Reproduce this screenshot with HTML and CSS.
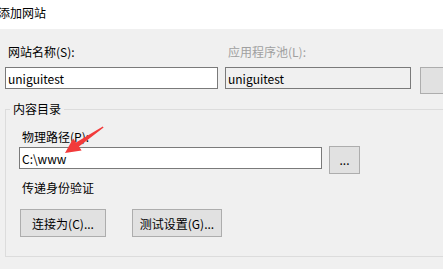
FILE: index.html
```html
<!DOCTYPE html>
<html lang="zh-CN">
<head>
  <meta charset="UTF-8" />
  <title>添加网站</title>
  <link rel="stylesheet" href="styles.css">
</head>
<body>
  <header class="title-bar">添加网站</header>

  <main class="dialog">
    <div class="site-row">
      <div class="field field-name">
        <label>网站名称(S):</label>
        <input type="text" class="text-box" value="uniguitest" />
      </div>
      <div class="field field-pool">
        <label class="disabled">应用程序池(L):</label>
        <input type="text" class="text-box readonly" value="uniguitest" readonly />
      </div>
      <div class="field field-select">
        <button class="btn btn-select"></button>
      </div>
    </div>

    <fieldset class="group">
      <legend>内容目录</legend>
      <div class="group-body">
        <label class="path-label">物理路径(P):</label>
        <div class="path-row">
          <input type="text" class="text-box path-box" value="C:\www" />
          <button class="btn btn-browse">...</button>
        </div>
        <div class="auth-label">传递身份验证</div>
        <div class="auth-buttons">
          <button class="btn btn-connect">连接为(C)...</button>
          <button class="btn btn-test">测试设置(G)...</button>
        </div>
      </div>
    </fieldset>
  </main>

  <!-- red annotation arrow pointing at the path -->
  <svg class="arrow" width="60" height="40" viewBox="60 120 60 40">
    <polygon points="103.6,127.4 79,146.6 81.6,150.6 65,153 73.2,138.6 76,142.4 102.8,126.6" fill="#f23b3b" />
  </svg>
</body>
</html>
```

FILE: styles.css
```css
* {
  box-sizing: border-box;
}

body {
  margin: 0;
  width: 443px;
  height: 269px;
  overflow: hidden;
  position: relative;
  background: #f0f0f0;
  color: #000;
  font-family: "Noto Sans CJK SC", "Noto Sans", sans-serif;
  font-size: 12px;
  line-height: 16px;
}

.title-bar {
  height: 29px;
  background: #fff;
  padding: 5px 0 0 0;
  margin-left: -2px;
  font-size: 12px;
}

.dialog {
  padding: 15px 0 0 5px;
}

.site-row {
  display: flex;
  align-items: flex-start;
  width: 470px;
}

.field {
  display: flex;
  flex-direction: column;
  gap: 7px;
}

.field label {
  padding-left: 3px;
  height: 16px;
}

.field label.disabled {
  color: #a0a0a0;
}

.field-name {
  width: 213px;
}

.field-pool {
  width: 186px;
  margin-left: 7px;
}

.field-select {
  margin-left: 9px;
  padding-top: 23px;
}

.text-box {
  height: 22px;
  width: 100%;
  margin: 0;
  border: 1px solid #7a7a7a;
  background: #fff;
  padding: 0 2px;
  font-family: inherit;
  font-size: 12px;
  color: #000;
  outline: none;
}

.text-box.readonly {
  background: #f0f0f0;
}

.btn {
  margin: 0;
  padding: 0;
  height: 28px;
  border: 1px solid #adadad;
  background: #e1e1e1;
  font-family: inherit;
  font-size: 12px;
  color: #000;
}

.btn-select {
  width: 40px;
  height: 27px;
}

.group {
  margin: 7px 0 0 0;
  padding: 0;
  width: 460px;
  border: 1px solid #dcdcdc;
  border-right: none;
  min-inline-size: 0;
}

.group legend {
  margin-left: 4px;
  padding: 0 3px;
  line-height: 16px;
}

.group-body {
  padding: 12px 0 19px 14px;
}

.path-label {
  display: block;
  margin-left: 2px;
  height: 16px;
}

.path-row {
  display: flex;
  align-items: flex-start;
  margin-top: 1px;
}

.path-box {
  width: 303px;
  margin: 1px 0 0 -1px;
  padding-left: 2px;
}

.btn-browse {
  width: 31px;
  margin-left: 7px;
  line-height: 12px;
}

.auth-label {
  margin: 6px 0 0 2px;
}

.auth-buttons {
  display: flex;
  gap: 26px;
  margin-top: 13px;
}

.btn-connect {
  width: 86px;
}

.btn-test {
  width: 90px;
}

.arrow {
  position: absolute;
  left: 60px;
  top: 120px;
}
```
